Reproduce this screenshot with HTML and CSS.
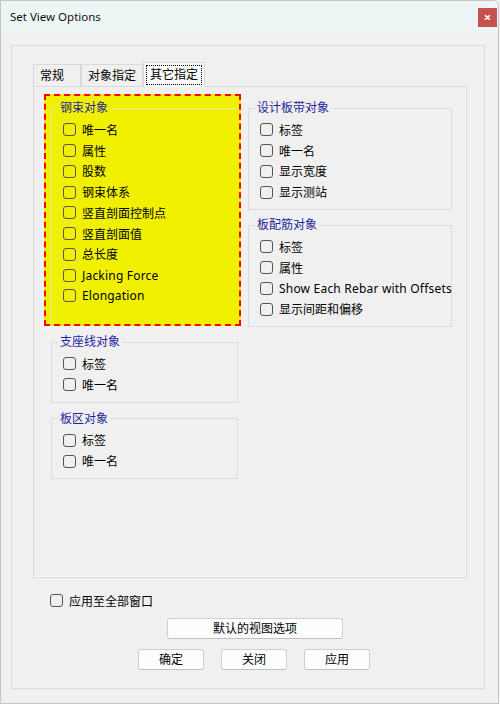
FILE: index.html
```html
<!DOCTYPE html>
<html lang="zh-CN">

<head>
    <meta charset="UTF-8">
    <meta name="viewport" content="width=device-width, initial-scale=1.0">
    <title>Set View Options</title>
    <link rel="stylesheet" href="styles.css">
</head>

<body>
    <div class="window">
        <div class="titlebar">
            <span class="title">Set View Options</span>
            <span class="close">&#215;</span>
        </div>

        <div class="client">
            <div class="frame">
                <!-- tab strip -->
                <div class="tabs">
                    <div class="tab">常规</div>
                    <div class="tab">对象指定</div>
                    <div class="tab active"><span class="focus">其它指定</span></div>
                </div>

                <div class="panel">
                    <div class="col col-left">
                        <div class="highlight">
                            <fieldset class="group group-hl">
                                <legend>钢束对象</legend>
                                <label class="check"><span class="box"></span>唯一名</label>
                                <label class="check"><span class="box"></span>属性</label>
                                <label class="check"><span class="box"></span>股数</label>
                                <label class="check"><span class="box"></span>钢束体系</label>
                                <label class="check"><span class="box"></span>竖直剖面控制点</label>
                                <label class="check"><span class="box"></span>竖直剖面值</label>
                                <label class="check"><span class="box"></span>总长度</label>
                                <label class="check latin"><span class="box"></span>Jacking Force</label>
                                <label class="check latin"><span class="box"></span>Elongation</label>
                            </fieldset>
                        </div>

                        <fieldset class="group group-small">
                            <legend>支座线对象</legend>
                            <label class="check"><span class="box"></span>标签</label>
                            <label class="check"><span class="box"></span>唯一名</label>
                        </fieldset>

                        <fieldset class="group group-small">
                            <legend>板区对象</legend>
                            <label class="check"><span class="box"></span>标签</label>
                            <label class="check"><span class="box"></span>唯一名</label>
                        </fieldset>
                    </div>

                    <div class="col col-right">
                        <fieldset class="group group-wide">
                            <legend>设计板带对象</legend>
                            <label class="check"><span class="box"></span>标签</label>
                            <label class="check"><span class="box"></span>唯一名</label>
                            <label class="check"><span class="box"></span>显示宽度</label>
                            <label class="check"><span class="box"></span>显示测站</label>
                        </fieldset>

                        <fieldset class="group group-wide">
                            <legend>板配筋对象</legend>
                            <label class="check"><span class="box"></span>标签</label>
                            <label class="check"><span class="box"></span>属性</label>
                            <label class="check latin over"><span class="box"></span>Show Each Rebar with Offsets</label>
                            <label class="check"><span class="box"></span>显示间距和偏移</label>
                        </fieldset>
                    </div>
                </div>

                <label class="check apply-all"><span class="box"></span>应用至全部窗口</label>

                <button type="button" class="btn btn-default">默认的视图选项</button>

                <div class="btn-row">
                    <button type="button" class="btn">确定</button>
                    <button type="button" class="btn">关闭</button>
                    <button type="button" class="btn">应用</button>
                </div>
            </div>
        </div>
    </div>
</body>

</html>
```

FILE: styles.css
```css
body {
    margin: 0;
    background-color: #f0f0f0;
    font-family: "Noto Sans", "Noto Sans CJK SC", sans-serif;
    font-size: 12px;
    color: #000;
}

.window {
    width: 499px;
    height: 704px;
    box-sizing: border-box;
    border: 1px solid #c6c6c6;
    border-top-right-radius: 6px;
    background-color: #f0f0f0;
    overflow: hidden;
}

.titlebar {
    display: flex;
    align-items: center;
    height: 31px;
    padding-left: 9px;
    background-color: #eef5f5;
}

.title {
    color: #111;
    font-size: 11.5px;
}

.close {
    align-self: flex-start;
    width: 19px;
    height: 19px;
    margin: 7px 1px 0 auto;
    background-color: #c75050;
    color: #fff;
    font-size: 13px;
    font-weight: bold;
    line-height: 18px;
    text-align: center;
}

.client {
    padding: 13px 0 0 10px;
}

.frame {
    width: 474px;
    height: 644px;
    box-sizing: border-box;
    border: 1px solid #dcdcdc;
    padding: 16px 0 0 21px;
}

/* tabs */

.tabs {
    display: flex;
    align-items: flex-end;
    height: 24px;
}

.tab {
    height: 22px;
    min-width: 48px;
    box-sizing: border-box;
    border: 1px solid #d9d9d9;
    border-bottom: none;
    padding: 0 6px;
    line-height: 21px;
}

.tab.active {
    position: relative;
    z-index: 1;
    height: 25px;
    margin-bottom: -1px;
    padding: 2px 2px 0;
    background-color: #f9f9f9;
}

.focus {
    display: block;
    border: 1px dotted #000;
    padding: 0 3px;
    line-height: 18px;
}

.panel {
    display: flex;
    align-items: flex-start;
    gap: 7px;
    width: 434px;
    height: 492px;
    box-sizing: border-box;
    border: 1px solid #dadada;
    box-shadow: inset -1px -1px 0 #fbfbfb;
    padding: 7px 0 0 10px;
}

.col-left {
    width: 197px;
}

.col-right {
    width: 204px;
    padding-top: 6px;
}

.highlight {
    height: 232px;
    box-sizing: border-box;
    border: 2px dashed #ff0000;
    background-color: #f0f000;
    padding: 4px 0 0 5px;
    overflow: hidden;
}

/* group boxes */

.group {
    margin: 0;
    min-width: 0;
    border: 1px solid #dcdcdc;
    padding: 3.5px 0 6.5px 11px;
}

.group legend {
    margin-left: -5px;
    padding: 0 2px;
    line-height: 16px;
    color: #1f1f9c;
}

.group-hl {
    width: 195px;
    box-sizing: border-box;
    border-color: #e2e2a6;
    padding-bottom: 40px;
}

.group-small {
    width: 187px;
    box-sizing: border-box;
    margin: 8px 0 0 7px;
}

.group-wide {
    width: 204px;
    box-sizing: border-box;
}

.group-wide + .group-wide {
    margin-top: 7px;
}

/* check boxes */

.check {
    display: flex;
    align-items: center;
    height: 20.75px;
    white-space: nowrap;
}

.check.latin {
    letter-spacing: 0.2px;
}

.check.over {
    position: relative;
    z-index: 1;
}

.check.over,
.check.over .box {
    background-color: #f0f0f0;
}

.box {
    width: 13px;
    height: 13px;
    box-sizing: border-box;
    border: 1px solid #555;
    border-radius: 3px;
    margin-right: 6px;
    flex-shrink: 0;
}

.apply-all {
    height: 21px;
    margin: 12px 0 0 17px;
}

/* buttons */

.btn {
    display: block;
    height: 21px;
    box-sizing: border-box;
    border: 1px solid #cfcfcf;
    border-bottom-color: #c0c0c0;
    border-radius: 3px;
    background-color: #fdfdfd;
    font-family: inherit;
    font-size: 12px;
    color: #000;
    padding: 0;
    line-height: 18px;
}

.btn-default {
    width: 176px;
    margin: 7px 0 0 134px;
}

.btn-row {
    display: flex;
    gap: 17px;
    margin: 10px 0 0 105px;
}

.btn-row .btn {
    width: 66px;
}
```
